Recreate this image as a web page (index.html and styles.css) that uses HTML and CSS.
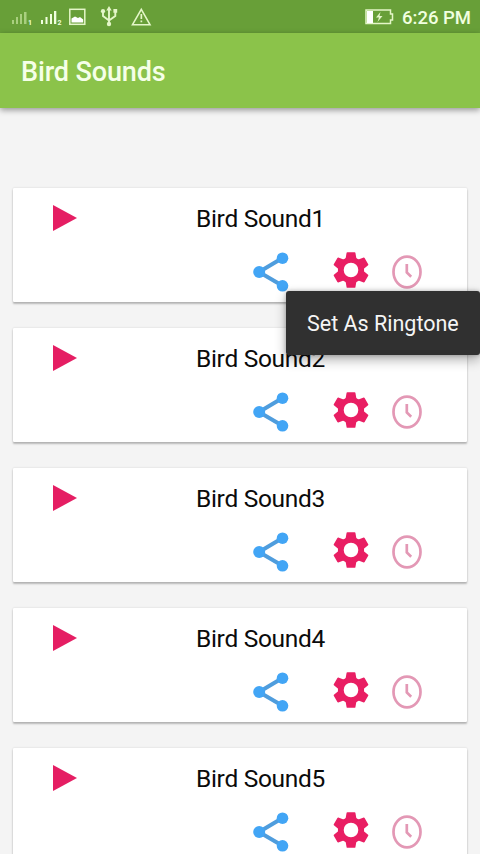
FILE: index.html
```html
<!DOCTYPE html>
<html lang="en">
<head>
<meta charset="utf-8">
<title>Bird Sounds</title>
<link rel="stylesheet" href="styles.css">
</head>
<body>
<svg class="sprite" aria-hidden="true">
  <symbol id="play" viewBox="0 0 24 26"><path d="M0 0 24 13 0 26z"/></symbol>
  <symbol id="share" viewBox="0 0 36 40"><path d="M29.5 6 6 20l23.500 13.800" fill="none" stroke="#4f9ddd" stroke-width="4"/><circle cx="6.200" cy="20" r="6"/><circle cx="29.500" cy="6.200" r="5.800"/><circle cx="29.500" cy="33.800" r="5.800"/></symbol>
  <symbol id="gear" viewBox="-18 -18 36 36">
    <circle r="10.200" fill="none" stroke="#e91e63" stroke-width="5.800"/>
    <path id="teeth" d="M-5.500-11-4.400-17.200q.1-.6.800-.6h7.200q.7 0 .8.600L5.500-11zM-5.500 11-4.400 17.200q.1.600.8.600h7.200q.7 0 .8-.6L5.500 11z"/>
    <use href="#teeth" transform="rotate(60)"/>
    <use href="#teeth" transform="rotate(120)"/>
  </symbol>
  <symbol id="clock" viewBox="0 0 30 34"><g fill="none" stroke="#e398b5"><ellipse cx="15" cy="17" rx="13.500" ry="15.300" stroke-width="2.700"/><path d="M14.800 9v8.500l4.400 4.300" stroke-width="2.700"/></g></symbol>
</svg>

<header class="status">
  <svg class="status-icons" viewBox="0 0 160 34" aria-hidden="true">
    <g fill="#a9cf7f"><path d="M12 20h2v4h-2zM16 17h2v7h-2zM20 14h2v10h-2zM24 12h2.500v12H24z"/></g>
    <g fill="#f1ffdf"><path d="M41 20h2v4h-2zM45.500 17h2v7h-2zM50 14h2v10h-2zM54 11h2.300v13H54z"/></g>
    <text class="sim" x="28" y="25">1</text><text class="sim" x="57.500" y="25">2</text>
    <rect x="69.800" y="9.300" width="15" height="15" fill="none" stroke="#e4f6c8" stroke-width="1.500"/>
    <path d="M71.500 22.500v-4l3.500-2 3 1.500 2-1 3.200 2.500v3z" fill="#fff"/>
    <g fill="none" stroke="#e4f6c8" stroke-width="1.900"><path d="M109 9v15M103 12v4l6 4.500M115.300 12v4l-6.300 4.500"/></g>
    <g fill="#e4f6c8"><path d="M109 6l2.700 4.500h-5.400zM113.400 9h3.800v3.800h-3.800z"/><circle cx="103" cy="11.200" r="2.100"/><circle cx="109" cy="24" r="2.200"/></g>
    <path d="M141.300 9.300 150 24.700h-17.500z" fill="none" stroke="#e4f6c8" stroke-width="1.600"/>
    <path d="M140.500 14h1.700v5h-1.700zM140.500 20.500h1.700v1.700h-1.700z" fill="#e4f6c8"/>
  </svg>
  <svg class="battery" viewBox="0 0 30 16" aria-hidden="true">
    <path d="M1 1h24.500v4h2v6h-2v3.500H1z" fill="none" stroke="#e4f6c8" stroke-width="1.500"/>
    <path d="M2 2h6v12H2z" fill="#fff"/>
    <path d="M15.500 3 11 8.500h3L12.500 13 17.500 7h-3z" fill="#e4f6c8"/>
  </svg>
  <span class="time">6:26 PM</span>
</header>
<div class="toolbar"><h1>Bird Sounds</h1></div>

<main class="list">
  <article class="card">
    <div class="head"><svg class="play"><use href="#play"/></svg><span class="name">Bird Sound1</span></div>
    <div class="actions"><svg class="share"><use href="#share"/></svg><svg class="gear"><use href="#gear"/></svg><svg class="clock"><use href="#clock"/></svg></div>
    <div class="menu">Set As Ringtone</div>
  </article>
  <article class="card">
    <div class="head"><svg class="play"><use href="#play"/></svg><span class="name">Bird Sound2</span></div>
    <div class="actions"><svg class="share"><use href="#share"/></svg><svg class="gear"><use href="#gear"/></svg><svg class="clock"><use href="#clock"/></svg></div>
  </article>
  <article class="card">
    <div class="head"><svg class="play"><use href="#play"/></svg><span class="name">Bird Sound3</span></div>
    <div class="actions"><svg class="share"><use href="#share"/></svg><svg class="gear"><use href="#gear"/></svg><svg class="clock"><use href="#clock"/></svg></div>
  </article>
  <article class="card">
    <div class="head"><svg class="play"><use href="#play"/></svg><span class="name">Bird Sound4</span></div>
    <div class="actions"><svg class="share"><use href="#share"/></svg><svg class="gear"><use href="#gear"/></svg><svg class="clock"><use href="#clock"/></svg></div>
  </article>
  <article class="card">
    <div class="head"><svg class="play"><use href="#play"/></svg><span class="name">Bird Sound5</span></div>
    <div class="actions"><svg class="share"><use href="#share"/></svg><svg class="gear"><use href="#gear"/></svg><svg class="clock"><use href="#clock"/></svg></div>
  </article>
</main>
</body>
</html>
```
FILE: styles.css
```css
* { box-sizing: border-box; }
body {
  margin: 0;
  height: 854px;
  overflow: hidden;
  background: #f4f4f4;
  font-family: Roboto, "Liberation Sans", sans-serif;
  display: flex;
  flex-direction: column;
}
svg { display: block; flex: none; }
.sprite { width: 0; height: 0; position: absolute; }

.status {
  flex: none;
  height: 33px;
  padding-right: 9px;
  display: flex;
  align-items: center;
  background: #689f38;
  color: #f1ffe0;
}
.status-icons { width: 160px; height: 34px; margin-right: auto; }
.sim { font-size: 7px; font-weight: 700; fill: #f1ffdf; }
.battery { width: 30px; height: 16px; margin-right: 7px; }
.time { font-size: 18.5px; font-weight: 500; line-height: 34px; padding-top: 2px; white-space: nowrap; }

.toolbar {
  flex: none;
  height: 75px;
  padding-left: 21px;
  display: flex;
  align-items: center;
  background: #8bc34a;
  box-shadow: 0 2px 6px rgba(0, 0, 0, .4);
}
.toolbar h1 {
  margin: 3px 0 0;
  font-size: 27px;
  line-height: 32px;
  font-weight: 500;
  letter-spacing: -.12px;
  color: #f5ffe8;
}

.list {
  flex: none;
  padding: 80px 13px 0;
  display: flex;
  flex-direction: column;
  gap: 26px;
}
.card {
  position: relative;
  height: 114px;
  padding-top: 16px;
  background: #fff;
  border-radius: 1px;
  box-shadow: 0 2px 2px rgba(0, 0, 0, .24), 0 0 2px rgba(0, 0, 0, .16);
}
.head { display: flex; align-items: center; height: 28px; padding-left: 39.5px; }
.play { width: 24px; height: 26px; fill: #e51e63; }
.name {
  margin-left: 119.5px;
  padding-top: 2px;
  font-size: 24.5px;
  line-height: 28px;
  letter-spacing: -.3px;
  color: #0b0b0b;
  white-space: nowrap;
}
.actions { display: flex; align-items: center; height: 40px; margin-top: 20px; padding-left: 240px; }
.share { width: 36px; height: 40px; fill: #42a5f5; }
.gear { width: 36px; height: 36px; margin: 0 23.5px 5px 43.5px; fill: #e91e63; }
.clock { width: 30px; height: 34px; margin-bottom: 1px; }

.menu {
  position: absolute;
  z-index: 2;
  top: 103px;
  right: -13px;
  width: 194px;
  height: 64px;
  padding-left: 21px;
  background: #303030;
  border-radius: 3px;
  box-shadow: 0 5px 12px rgba(0, 0, 0, .3), 0 0 4px rgba(0, 0, 0, .25);
  color: #f5f5f5;
  font-size: 21.500px;
  line-height: 66px;
  white-space: nowrap;
}
```
